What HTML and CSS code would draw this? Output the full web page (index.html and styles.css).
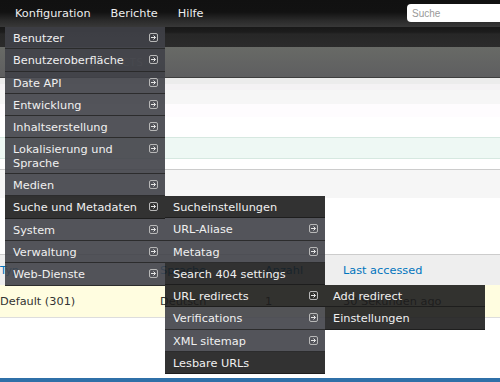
FILE: index.html
```html
<!DOCTYPE html>
<html lang="de">
<head>
<meta charset="UTF-8">
<meta name="viewport" content="width=device-width, initial-scale=1.0">
<title>URL redirects</title>
<link rel="stylesheet" href="styles.css">
</head>
<body>

<svg class="defs" width="0" height="0">
    <symbol id="arr" viewBox="0 0 9 9">
        <rect x="0.5" y="0.5" width="8" height="8" rx="1.5" fill="none" stroke="#b8b8b8"/>
        <path d="M2 4.5H6.5M4.5 2.5L6.5 4.5L4.5 6.5" fill="none" stroke="#e6e6e6" stroke-width="1"/>
    </symbol>
</svg>

<div class="page">
    <div class="toolbar">
        <ul class="nav">
            <li>Konfiguration</li>
            <li>Berichte</li>
            <li>Hilfe</li>
        </ul>
        <input class="search" type="text" placeholder="Suche">
    </div>
    <div class="shortcuts"></div>
    <div class="page-header">
        <h1>URL REDIRECTS</h1>
    </div>

    <div class="band b1"></div>
    <div class="band b2"></div>
    <div class="band b3"></div>
    <div class="band b4"></div>
    <div class="band b5"></div>
    <div class="band message"></div>
    <div class="band b6"></div>
    <div class="band filter"></div>

    <table class="redirects">
        <thead>
            <tr>
                <th class="c1">Typ</th>
                <th class="c2">Sprache</th>
                <th class="c3">Anzahl</th>
                <th>Last accessed</th>
            </tr>
        </thead>
        <tbody>
            <tr>
                <td>Default (301)</td>
                <td>Deutsch</td>
                <td>1</td>
                <td>30 Sekunden ago</td>
            </tr>
        </tbody>
    </table>

    <div class="spacer"></div>
    <div class="footer-bar"></div>
</div>

<!-- dropdown menus -->
<ul class="menu level1">
    <li class="item">Benutzer<svg class="arrow"><use href="#arr"/></svg></li>
    <li class="item">Benutzeroberfläche<svg class="arrow"><use href="#arr"/></svg></li>
    <li class="item">Date API<svg class="arrow"><use href="#arr"/></svg></li>
    <li class="item">Entwicklung<svg class="arrow"><use href="#arr"/></svg></li>
    <li class="item">Inhaltserstellung<svg class="arrow"><use href="#arr"/></svg></li>
    <li class="item">Lokalisierung und<br>Sprache<svg class="arrow"><use href="#arr"/></svg></li>
    <li class="item">Medien<svg class="arrow"><use href="#arr"/></svg></li>
    <li class="item dark">Suche und Metadaten<svg class="arrow"><use href="#arr"/></svg></li>
    <li class="item">System<svg class="arrow"><use href="#arr"/></svg></li>
    <li class="item">Verwaltung<svg class="arrow"><use href="#arr"/></svg></li>
    <li class="item">Web-Dienste<svg class="arrow"><use href="#arr"/></svg></li>
</ul>

<ul class="menu level2">
    <li class="item dark">Sucheinstellungen</li>
    <li class="item">URL-Aliase<svg class="arrow"><use href="#arr"/></svg></li>
    <li class="item">Metatag<svg class="arrow"><use href="#arr"/></svg></li>
    <li class="item dark">Search 404 settings</li>
    <li class="item dark">URL redirects<svg class="arrow"><use href="#arr"/></svg></li>
    <li class="item">Verifications<svg class="arrow"><use href="#arr"/></svg></li>
    <li class="item">XML sitemap<svg class="arrow"><use href="#arr"/></svg></li>
    <li class="item dark">Lesbare URLs</li>
</ul>

<ul class="menu level3">
    <li class="item dark">Add redirect</li>
    <li class="item dark">Einstellungen</li>
</ul>

</body>
</html>
```

FILE: styles.css
```css
body {
    margin: 0;
    width: 500px;
    height: 382px;
    overflow: hidden;
    position: relative;
    background: white;
    font-family: 'DejaVu Sans', Verdana, sans-serif;
    font-size: 11.3px;
}

.defs {
    position: absolute;
}

.page {
    height: 382px;
    display: flex;
    flex-direction: column;
}

.toolbar {
    height: 27px;
    flex-shrink: 0;
    display: flex;
    align-items: flex-start;
    justify-content: space-between;
    background: linear-gradient(#111 0%, #121212 45%, #2a2a2a 75%, #383838 100%);
}

.nav {
    list-style: none;
    margin: 0;
    padding: 0 0 0 5px;
    display: flex;
}

.nav li {
    padding: 0 10px;
    line-height: 27px;
    color: #eee;
}

.search {
    margin-top: 4px;
    width: 93px;
    height: 18px;
    box-sizing: border-box;
    border: none;
    border-radius: 4px 0 0 4px;
    padding: 1px 5px 0;
    font-family: 'Liberation Sans', Arial, sans-serif;
    font-size: 10px;
    background: white;
}

.search::placeholder {
    color: #999;
}

.shortcuts {
    height: 20px;
    flex-shrink: 0;
    background: linear-gradient(#191919 0%, #1c1c1c 25%, #272727 35%, #2b2b2b 100%);
}

.page-header {
    height: 30px;
    flex-shrink: 0;
    background: linear-gradient(#686a66, #5e5e60);
    border-bottom: 1px solid #3e3e3e;
    overflow: hidden;
}

.page-header h1 {
    margin: 0;
    padding: 10px 0 0 56px;
    font-size: 10px;
    font-weight: normal;
    letter-spacing: 0.6px;
    color: #8c8c8c;
}

.band {
    flex-shrink: 0;
}

.b1 { height: 6px; background: #ececec; }
.b2 { height: 6px; background: #f4f2f4; }
.b3 { height: 14px; background: #f6f6f6; }
.b4 { height: 13px; background: #fefcfe; }
.b5 { height: 20px; background: white; }

.message {
    height: 20px;
    background: #eef8f4;
    border-top: 1px solid #d6e8e0;
    border-bottom: 1px solid #d6e8e0;
}

.b6 { height: 10px; background: white; }

.filter {
    height: 28px;
    background: #f6f6f6;
    border-top: 1px solid #cccccc;
    margin-bottom: 56px;
}

.redirects {
    border-collapse: collapse;
    width: 100%;
    flex-shrink: 0;
    font-size: 11.3px;
}

.redirects th {
    height: 30px;
    padding: 0;
    text-align: left;
    font-weight: normal;
    color: #0074bd;
    background: #eeeeee;
    border-top: 1px solid #cccccc;
}

.redirects td {
    height: 31px;
    padding: 1px 0 0;
    color: #333;
    background: #fffde0;
    border-bottom: 1px solid #dddddd;
}

.c1 { width: 160px; }
.c2 { width: 105px; }
.c3 { width: 78px; }

.spacer {
    flex: 1;
}

.footer-bar {
    height: 4px;
    flex-shrink: 0;
    background: #2f70a8;
}

/* dropdown menus */
.menu {
    position: absolute;
    width: 160px;
    list-style: none;
    margin: 0;
    padding: 0;
}

.level1 { left: 5px; top: 27px; }
.level2 { left: 165px; top: 196px; }
.level3 { left: 325px; top: 285px; }

.item {
    display: flex;
    justify-content: space-between;
    align-items: flex-start;
    padding: 5px 7px 3px 8px;
    line-height: 13.3px;
    color: #f0f0f0;
    background: rgba(64, 65, 72, 0.9);
    border-bottom: 1px solid rgba(40, 40, 40, 0.9);
}

.item.dark {
    background: rgba(28, 28, 28, 0.9);
    border-bottom-color: rgba(28, 28, 28, 0.9);
}

.arrow {
    width: 9px;
    height: 9px;
    margin-top: 1px;
    flex-shrink: 0;
}
```
